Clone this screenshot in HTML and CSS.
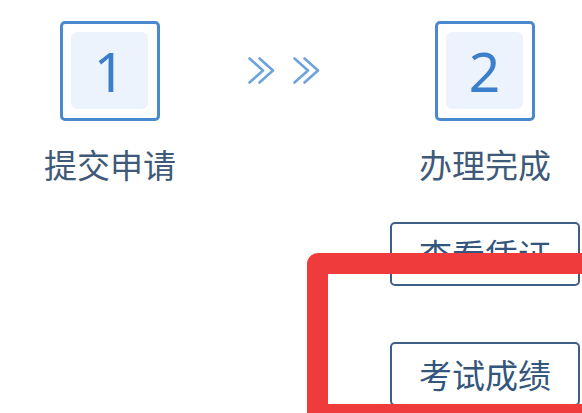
FILE: index.html
```html
<!DOCTYPE html>
<html lang="zh">
<head>
<meta charset="utf-8">
<link rel="stylesheet" href="styles.css">
</head>
<body>
<div class="page">
  <div class="steps">
    <div class="step step-first">
      <div class="num-box"><div class="num-inner">1</div></div>
      <div class="step-label">提交申请</div>
    </div>
    <svg class="arrows" width="72" height="27" viewBox="0 0 72 27">
      <g fill="none" stroke="#6ea3dc" stroke-width="2.6" stroke-linecap="round" stroke-linejoin="round">
        <path d="M1.5 1.5 L15 13.5 L1.5 25.5"/>
        <path d="M11.5 1.5 L25 13.5 L11.5 25.5"/>
        <path d="M46.5 1.5 L60 13.5 L46.5 25.5"/>
        <path d="M56.5 1.5 L70 13.5 L56.5 25.5"/>
      </g>
    </svg>
    <div class="step step-second">
      <div class="num-box"><div class="num-inner">2</div></div>
      <div class="step-label">办理完成</div>
    </div>
  </div>
  <div class="actions">
    <div class="btn">查看凭证</div>
    <div class="btn">考试成绩</div>
  </div>
  <div class="highlight"></div>
</div>
</body>
</html>
```

FILE: styles.css
```css
html, body {
  margin: 0;
  padding: 0;
  background: #ffffff;
}
body {
  width: 582px;
  height: 413px;
  overflow: hidden;
  font-family: "Noto Sans CJK SC", "Noto Sans", sans-serif;
}
.page {
  position: relative;
  width: 582px;
  height: 413px;
  overflow: hidden;
}
.steps {
  display: flex;
  align-items: flex-start;
  padding-top: 21px;
}
.step {
  width: 134px;
  display: flex;
  flex-direction: column;
  align-items: center;
}
.step-first {
  margin-left: 43px;
}
.step-second {
  margin-left: 98px;
}
.arrows {
  margin-left: 71px;
  margin-top: 36px;
  display: block;
}
.num-box {
  width: 100px;
  height: 100px;
  box-sizing: border-box;
  border: 3px solid #4a89cd;
  border-radius: 5px;
  padding: 8px 9px 9px 8px;
  background: #fff;
}
.num-inner {
  width: 100%;
  height: 100%;
  background: #edf3fc;
  border-radius: 6px;
  display: flex;
  align-items: center;
  justify-content: center;
  font-family: "Noto Sans", "Open Sans", sans-serif;
  font-size: 55px;
  line-height: 1;
  color: #3b7ecb;
}
.step-label {
  margin-top: 23px;
  font-size: 33px;
  line-height: 40px;
  color: #3f5a78;
  white-space: nowrap;
}
.actions {
  display: flex;
  flex-direction: column;
  gap: 56px;
  margin-top: 38px;
  margin-left: 390px;
  width: 190px;
}
.btn {
  height: 64px;
  box-sizing: border-box;
  border: 2px solid #3d5f86;
  border-radius: 5px;
  display: flex;
  align-items: center;
  justify-content: center;
  font-size: 33px;
  color: #34557c;
  white-space: nowrap;
  background: #fff;
}
.highlight {
  position: absolute;
  left: 307px;
  top: 253px;
  width: 320px;
  height: 172px;
  border: 21px solid #f03b3c;
  border-radius: 11px;
  box-sizing: border-box;
}
```
